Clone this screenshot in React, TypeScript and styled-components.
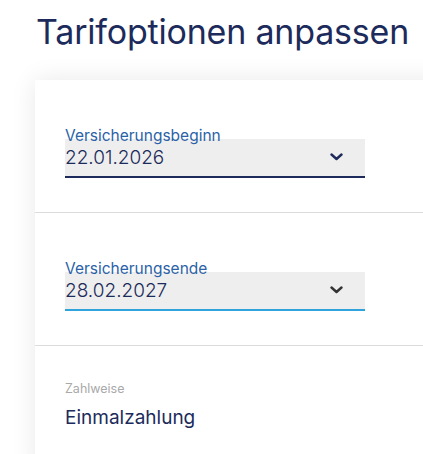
import styled, { createGlobalStyle } from "styled-components";

const GlobalStyle = createGlobalStyle`
  html, body {
    margin: 0;
    padding: 0;
    background: #ffffff;
    font-family: "Inter", "Liberation Sans", sans-serif;
    overflow: hidden;
  }
`;

const Page = styled.div`
  width: 423px;
  height: 454px;
  overflow: hidden;
`;

const Title = styled.h1`
  margin: 0;
  padding: 10px 0 0 36px;
  height: 70px;
  box-sizing: border-box;
  font-size: 34px;
  font-weight: 400;
  color: #1c2b5b;
  letter-spacing: -0.2px;
  line-height: 44px;
`;

const Card = styled.div`
  margin-left: 35px;
  margin-top: 10px;
  width: 420px;
  background: #fff;
  box-shadow: 0 0 24px rgba(0, 0, 0, 0.09);
`;

const Section = styled.div<{ $compact?: boolean }>`
  height: 133px;
  box-sizing: border-box;
  padding: ${(p) => (p.$compact ? "35px" : "47px")} 0 0 30px;
  border-bottom: 1px solid #dcdcdc;

  &:last-child {
    border-bottom: none;
  }
`;

const Field = styled.div`
  width: 300px;
`;

const FieldLabel = styled.div`
  position: relative;
  z-index: 1;
  font-size: 15.5px;
  line-height: 17px;
  color: #2b62a7;
  margin-bottom: -5px;
`;

const SelectBox = styled.div<{ $active?: boolean }>`
  height: 39px;
  box-sizing: border-box;
  background: #eeeeee;
  border-bottom: 2px solid ${(p) => (p.$active ? "#2ea3dc" : "#1c2b5b")};
  display: flex;
  align-items: center;
  justify-content: space-between;
  padding: 0 22px 1px 0;
  font-size: 19px;
  font-weight: 300;
  color: #1c2b5b;
`;

const Chevron = ({ color }: { color: string }) => (
  <svg width="13" height="8" viewBox="0 0 13 8">
    <path d="M1.5 1.5 L6.5 6 L11.5 1.5" fill="none" stroke={color} strokeWidth="2.4" strokeLinecap="round" strokeLinejoin="round" />
  </svg>
);

const SmallLabel = styled.div`
  font-size: 12.5px;
  color: #a9a9a9;
  margin-bottom: 10px;
`;

const PlainValue = styled.div`
  font-size: 19px;
  color: #1c2b5b;
`;

export default function App() {
  return (
    <Page>
      <GlobalStyle />
      <Title>Tarifoptionen anpassen</Title>
      <Card>
        <Section>
          <Field>
            <FieldLabel>Versicherungsbeginn</FieldLabel>
            <SelectBox>
              <span>22.01.2026</span>
              <Chevron color="#1c2b5b" />
            </SelectBox>
          </Field>
        </Section>
        <Section>
          <Field>
            <FieldLabel>Versicherungsende</FieldLabel>
            <SelectBox $active>
              <span>28.02.2027</span>
              <Chevron color="#333333" />
            </SelectBox>
          </Field>
        </Section>
        <Section $compact>
          <SmallLabel>Zahlweise</SmallLabel>
          <PlainValue>Einmalzahlung</PlainValue>
        </Section>
      </Card>
    </Page>
  );
}
